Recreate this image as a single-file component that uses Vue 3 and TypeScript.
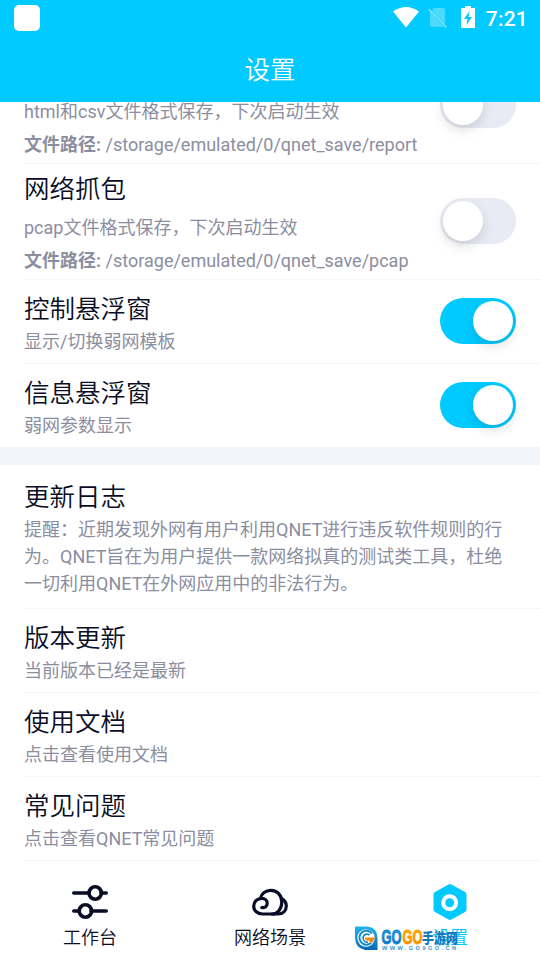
<script setup lang="ts">
import { ref } from 'vue'

interface Setting {
  title: string
  desc: string
  path?: string
  enabled?: boolean
  kind: string
}

const tools = ref<Setting[]>([
  { title: '', desc: 'html和csv文件格式保存，下次启动生效', path: '/storage/emulated/0/qnet_save/report', enabled: false, kind: 'partial' },
  { title: '网络抓包', desc: 'pcap文件格式保存，下次启动生效', path: '/storage/emulated/0/qnet_save/pcap', enabled: false, kind: 'file' },
  { title: '控制悬浮窗', desc: '显示/切换弱网模板', enabled: true, kind: 'simple' },
  { title: '信息悬浮窗', desc: '弱网参数显示', enabled: true, kind: 'simple last' },
])

const info: Setting[] = [
  { title: '更新日志', desc: '提醒：近期发现外网有用户利用QNET进行违反软件规则的行为。QNET旨在为用户提供一款网络拟真的测试类工具，杜绝一切利用QNET在外网应用中的非法行为。', kind: 'notice' },
  { title: '版本更新', desc: '当前版本已经是最新', kind: 'simple' },
  { title: '使用文档', desc: '点击查看使用文档', kind: 'simple' },
  { title: '常见问题', desc: '点击查看QNET常见问题', kind: 'simple' },
]
</script>

<template>
  <div class="screen">
    <header>
      <div class="status">
        <span class="app-dot"></span>
        <svg class="status-icons" width="90" height="36" viewBox="0 0 90 36">
          <path d="M0 11.500Q13 2.500 26 11.500L13 27.500Z" fill="#fff" />
          <path d="M41 8H50Q52 8 52 10V24.500L39.500 11.500V9.500ZM37 12L51 27H39Q37 27 37 25Z" fill="#fff" opacity=".3" />
          <path d="M35.500 9L53.500 27.500" stroke="#fff" stroke-width="1.600" opacity=".5" />
          <path fill-rule="evenodd" d="M72 6H78V8H82V28H68V8H72ZM76.500 11L71 19H74.500L73.500 25L79 17H75.500Z" fill="#fff" />
        </svg>
        <time>7:21</time>
      </div>
      <h1>设置</h1>
    </header>

    <main>
      <section>
        <article v-for="item in tools" :key="item.desc" class="row" :class="item.kind">
          <div class="copy">
            <h2 v-if="item.title">{{ item.title }}</h2>
            <p class="desc">{{ item.desc }}</p>
            <p v-if="item.path" class="path"><b>文件路径:</b> {{ item.path }}</p>
          </div>
          <button
            class="switch"
            :class="{ on: item.enabled }"
            role="switch"
            :aria-checked="item.enabled"
            @click="item.enabled = !item.enabled"
          ><i></i></button>
        </article>
      </section>
      <section class="info">
        <article v-for="item in info" :key="item.title" class="row" :class="item.kind">
          <div class="copy">
            <h2>{{ item.title }}</h2>
            <p class="desc">{{ item.desc }}</p>
          </div>
        </article>
      </section>
    </main>

    <nav>
      <a>
        <svg width="40" height="40" viewBox="0 0 40 40" fill="none" stroke="#080d25" stroke-width="3.600" stroke-linecap="round">
          <path d="M3.800 11H19M31 11H36.200M3.800 29H9M21 29H36.200" />
          <circle cx="25.200" cy="11" r="6.200" /><circle cx="15.400" cy="29" r="6.200" />
        </svg>
        <span>工作台</span>
      </a>
      <a>
        <svg width="40" height="40" viewBox="0 0 40 40" fill="none" stroke="#080d25" stroke-width="3.200" stroke-linecap="round" stroke-linejoin="round">
          <path d="M11.800 25.500C15 26.200 17.200 24 17.200 21.300C17.200 18.200 14.800 16.400 11.800 16.400C7 16.400 3.700 19.800 3.700 24C3.700 28.800 7.500 32 12.500 32H22C28 32 31.800 26.500 31.800 20C31.800 13 27.200 8.300 20.800 8.300C15.500 8.300 11.600 11.500 10.500 16.200" />
          <path d="M31.200 16.500C34.400 18 36.300 20.500 36.300 24C36.300 28.800 32.800 32 28 32H22" />
        </svg>
        <span>网络场景</span>
      </a>
      <a class="active">
        <svg width="40" height="40" viewBox="0 0 40 40">
          <path d="M18.500 2.500Q20 1.700 21.500 2.500L35 10Q36.500 10.800 36.500 12.500V27.500Q36.500 29.200 35 30L21.500 37.500Q20 38.300 18.500 37.500L5 30Q3.500 29.200 3.500 27.500V12.500Q3.500 10.800 5 10Z" fill="#00caff" />
          <circle cx="19.700" cy="20.800" r="6.500" fill="none" stroke="#fff" stroke-width="4" />
        </svg>
        <span>设置</span>
      </a>
    </nav>

    <svg class="watermark" width="108" height="28" viewBox="0 0 108 28">
      <defs>
        <linearGradient id="blue" x2="0" y2="1"><stop stop-color="#22b5ef" /><stop offset="1" stop-color="#0868b8" /></linearGradient>
        <linearGradient id="orange" x2="0" y2="1"><stop stop-color="#ffc400" /><stop offset="1" stop-color="#ff7b00" /></linearGradient>
      </defs>
      <path d="M1 1.500H13Q23.500 2.500 23.500 13V25H11Q1 23 1 12Z" fill="url(#blue)" />
      <circle cx="12" cy="13" r="8.700" fill="#fff" />
      <path d="M18 8.500A7 7 0 1 0 17 18" fill="none" stroke="#168bc9" stroke-width="2" />
      <path d="M15.500 10A4 4 0 1 0 14 17" fill="none" stroke="#168bc9" stroke-width="1.700" />
      <path d="M10.500 12.500H21Q20 16 17 18.500L15 15.500H12Z" fill="#f58a09" />
      <g font-family="Liberation Sans, sans-serif" font-weight="bold" font-size="21">
        <text x="27.500" y="18.500" textLength="20" lengthAdjust="spacingAndGlyphs" fill="url(#blue)" stroke="#1685ca" stroke-width="1">GO</text>
        <text x="48.500" y="18.500" textLength="20" lengthAdjust="spacingAndGlyphs" fill="url(#orange)" stroke="#ff9d00" stroke-width="1">GO</text>
      </g>
      <text x="68" y="17.500" font-family="Noto Sans CJK SC, sans-serif" font-size="14" font-weight="900" textLength="36" lengthAdjust="spacingAndGlyphs" fill="#1478be">手游网</text>
      <text x="28" y="24.700" font-family="Liberation Sans, sans-serif" font-size="5.600" font-weight="bold" textLength="74" fill="#3195ce">WWW.GO9GO.CN</text>
    </svg>
  </div>
</template>

<style>
body { margin: 0; overflow: hidden; }
</style>
<style scoped>
* { box-sizing: border-box; }
.screen { position: relative; display: flex; flex-direction: column; width: 540px; height: 960px; overflow: hidden; background: #fff; color: #080d25; font-family: Roboto, "Noto Sans CJK SC", sans-serif; }
h1, h2, p { margin: 0; font-weight: 400; }
header { height: 102px; flex: none; background: #00caff; color: #fff; }
.status { height: 36px; display: flex; align-items: center; padding: 0 12px 0 14px; }
.app-dot { width: 26px; height: 26px; border-radius: 5px; background: #fff; }
.status-icons { margin-left: auto; }
time { width: 45px; padding-top: 1px; font-size: 21px; line-height: 36px; font-weight: 500; letter-spacing: .2px; white-space: nowrap; text-align: right; }
h1 { height: 66px; line-height: 68px; text-align: center; font-size: 25.5px; font-weight: 350; }
main { height: 759px; flex: none; overflow: hidden; }
.row { display: flex; justify-content: space-between; margin-left: 24px; padding-right: 24px; border-bottom: 1px solid #f5f5fa; }
.copy { flex: 1; min-width: 0; }
h2 { height: 37px; line-height: 37px; font-size: 25.5px; font-weight: 350; }
.desc, .path { font-size: 18px; line-height: 27px; color: #8b8e9f; }
.path b { font-weight: 700; }
.simple { height: 84px; padding-top: 11px; }
.last { height: 83px; border-bottom: 0; }
.file { height: 116px; padding-top: 7px; }
.file .desc { margin-top: 6px; }
.file .path, .partial .path { margin-top: 6px; }
.partial { height: 62px; }
.partial .desc { margin-top: -4px; }
.info { border-top: 18px solid #f3f5fa; }
.notice { height: 144px; padding-top: 14px; }
.switch { flex: none; width: 76px; height: 46px; margin-top: 7px; padding: 3px; display: flex; border: 0; border-radius: 23px; background: #e8ebf4; }
.switch i { width: 40px; height: 40px; border-radius: 50%; background: #fff; box-shadow: 0 5px 12px #00000021; }
.switch.on { justify-content: flex-end; background: #00caff; }
.file .switch { margin-top: 27px; }
.partial .switch { margin-top: -20px; }
nav { display: grid; grid-template-columns: repeat(3, 1fr); flex: 1; }
nav a { display: flex; flex-direction: column; align-items: center; padding-top: 21px; font-size: 18px; line-height: 32px; font-weight: 350; }
.active { color: #00caff; }
.watermark { position: absolute; left: 354px; top: 925px; }
</style>
